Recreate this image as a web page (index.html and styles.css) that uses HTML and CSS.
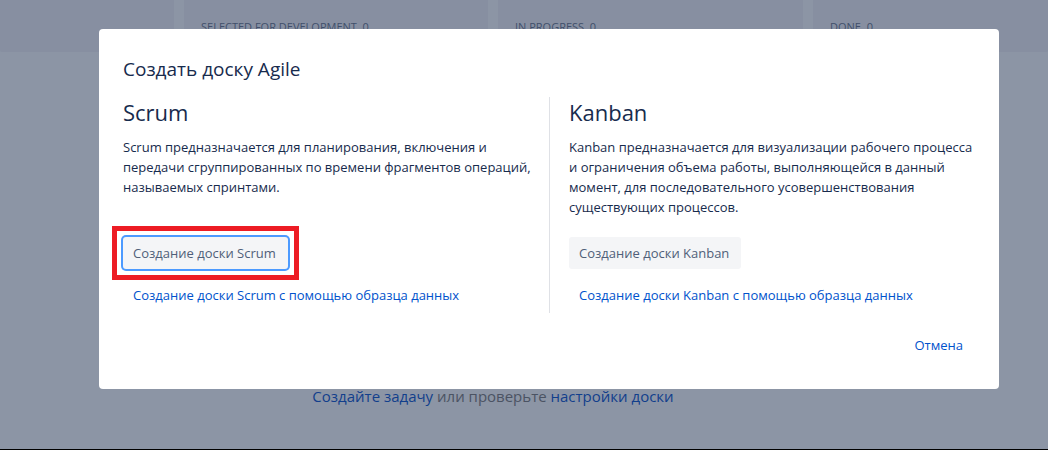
FILE: index.html
```html
<!DOCTYPE html>
<html lang="ru">
<head>
<meta charset="utf-8">
<meta name="viewport" content="width=device-width, initial-scale=1">
<title>Создать доску Agile</title>
<link rel="stylesheet" href="styles.css">
</head>
<body>
<main class="page">
  <div class="board">
    <div class="column"></div>
    <div class="column">SELECTED FOR DEVELOPMENT&nbsp; 0</div>
    <div class="column">IN PROGRESS&nbsp; 0</div>
    <div class="column">DONE&nbsp; 0</div>
  </div>
  <p class="hint"><a href="#create">Создайте задачу</a> или проверьте <a href="#settings">настройки доски</a></p>
</main>
<div class="overlay">
  <section class="dialog" role="dialog" aria-modal="true" aria-labelledby="dialog-title">
    <h1 class="dialog-title" id="dialog-title">Создать доску Agile</h1>
    <div class="options">
      <article class="option">
        <h2 class="option-title">Scrum</h2>
        <p class="option-text">Scrum предназначается для планирования, включения и передачи сгруппированных по времени фрагментов операций, называемых спринтами.</p>
        <div class="actions">
          <div class="highlight"><button class="button button-focused" type="button">Создание доски Scrum</button></div>
          <a class="sample-link" href="#scrum-sample">Создание доски Scrum с помощью образца данных</a>
        </div>
      </article>
      <article class="option">
        <h2 class="option-title">Kanban</h2>
        <p class="option-text">Kanban предназначается для визуализации рабочего процесса и ограничения объема работы, выполняющейся в данный момент, для последовательного усовершенствования существующих процессов.</p>
        <div class="actions">
          <button class="button" type="button">Создание доски Kanban</button>
          <a class="sample-link" href="#kanban-sample">Создание доски Kanban с помощью образца данных</a>
        </div>
      </article>
    </div>
    <footer class="dialog-footer">
      <button class="cancel" type="button">Отмена</button>
    </footer>
  </section>
</div>
</body>
</html>
```
FILE: styles.css
```css
* {
  box-sizing: border-box;
}

body {
  margin: 0;
  font-family: "Open Sans", "Noto Sans", sans-serif;
  font-size: 13px;
  line-height: 20px;
  color: #172b4d;
}

h1, h2, p {
  margin: 0;
  font-weight: 400;
}

a {
  color: #0052cc;
  text-decoration: none;
}

.page {
  display: flex;
  flex-direction: column;
  justify-content: space-between;
  min-height: 100vh;
  background: #8c95a5;
  border-bottom: 1px solid #000;
}

.board {
  display: grid;
  grid-template-columns: 174fr 304fr 305fr 235fr;
  gap: 10px;
}

.column {
  min-height: 52px;
  padding: 17px 17px 0;
  background: #878fa1;
  border-radius: 0 0 2px 2px;
  color: #414f6b;
  font-size: 11px;
  white-space: nowrap;
}

.hint {
  padding: 0 62px 41px 0;
  color: #4b5363;
  font-size: 15px;
  line-height: 24px;
  text-align: center;
}

.hint a {
  color: #123f8c;
}

.overlay {
  position: absolute;
  inset: 0;
  padding: 29px 49px 0 99px;
}

.dialog {
  max-width: 900px;
  margin: 0 auto;
  padding: 24px 24px 28px;
  background: #fff;
  border-radius: 4px;
}

.dialog-title {
  padding: 4px 0 16px;
  font-size: 19px;
  line-height: 24px;
}

.options {
  display: grid;
  grid-template-columns: 1fr 1fr;
}

.option {
  display: flex;
  flex-direction: column;
  padding-bottom: 2px;
}

.option:first-child {
  padding-right: 10px;
}

.option + .option {
  padding-left: 19px;
  border-left: 1px solid #dfe1e6;
}

.option-title {
  margin-bottom: 10px;
  font-size: 22px;
  line-height: 30px;
}

.actions {
  display: flex;
  flex-direction: column;
  align-items: flex-start;
  gap: 10px;
  margin-top: auto;
  padding-top: 20px;
}

.button,
.cancel {
  height: 32px;
  padding: 0 12px 0 10px;
  border: 0;
  border-radius: 3px;
  background: #f4f5f7;
  color: #505f79;
  font: inherit;
}

.button-focused {
  display: block;
  box-shadow: 0 0 0 2px #4c9aff;
}

.highlight {
  outline: 5px solid #ed1c24;
  outline-offset: 6px;
}

.sample-link {
  padding: 6px 10px;
}

.dialog-footer {
  display: flex;
  justify-content: flex-end;
  padding-top: 16px;
}

.cancel {
  background: none;
  color: #0052cc;
}
```
